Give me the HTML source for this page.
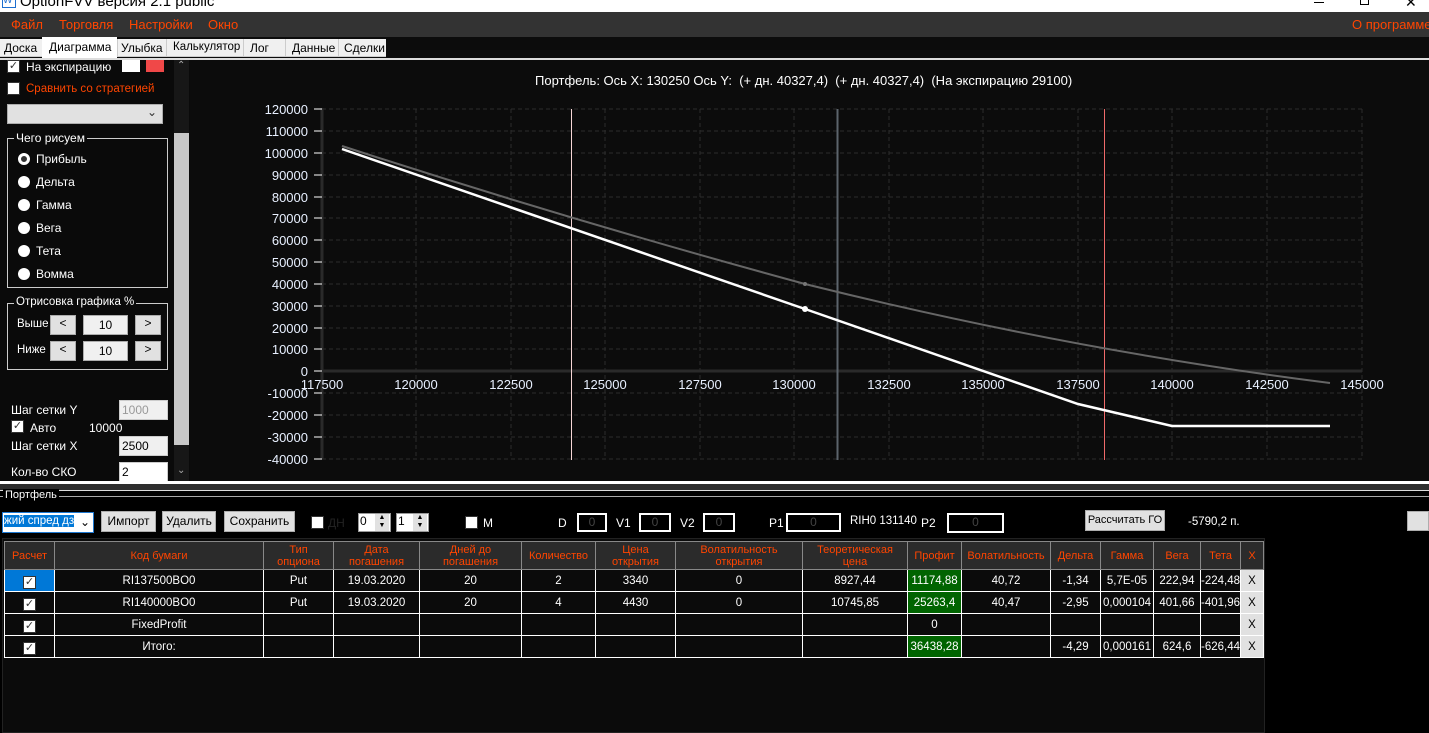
<!DOCTYPE html>
<html><head><meta charset="utf-8"><style>
*{box-sizing:border-box;margin:0;padding:0}
body{width:1429px;height:733px;background:#000;font-family:"Liberation Sans","DejaVu Sans",sans-serif;font-size:12px;color:#fff;position:relative;overflow:hidden}
.a{position:absolute;white-space:nowrap}
.btn{position:absolute;background:#e1e1e1;border:1px solid #adadad;color:#000;text-align:center;font-size:12px;white-space:nowrap}
.inp{position:absolute;border:2px solid #fff;background:#000;color:#444;text-align:center;font-size:12px}
.cb{position:absolute;width:13px;height:13px;background:#fff;border:1px solid #333}
.ck{position:absolute;width:13px;height:13px;background:#fff;border:1px solid #333;color:#333;font-size:11px;line-height:11px;text-align:center}
.rad{position:absolute;width:12px;height:12px;border-radius:50%;background:#fff}
table{border-collapse:collapse;position:absolute;left:4px;top:541px;table-layout:fixed}
td{border:1px solid #fff;text-align:center;font-size:11.5px;height:22px;padding:0;white-space:nowrap;overflow:hidden}
tr.h td{background:#2b2b2b;color:#ff4500;height:28px;line-height:12px;border-color:#888;font-size:11px}
.g{background:#006400}
.x{background:#e1e1e1;color:#000;border:1px solid #fff}
</style></head><body>
<div class="a" style="left:0;top:0;width:1429px;height:12px;background:#fff;overflow:hidden">
<div class="a" style="left:2px;top:-6px;width:14px;height:14px;border:1px solid #1e6fd0;color:#1e6fd0;font-size:10px">W</div>
<div class="a" style="left:20px;top:-7px;color:#000;font-size:15px">OptionFVV версия 2.1 public</div>
<div class="a" style="left:1314px;top:2px;width:10px;height:1px;background:#000"></div>
<div class="a" style="left:1360px;top:-4px;width:9px;height:9px;border:1px solid #000"></div>
<div class="a" style="left:1405px;top:-6px;color:#000;font-size:14px">✕</div>
</div>
<div class="a" style="left:0;top:12px;width:1429px;height:25px;background:#333;color:#ff4500;font-size:13px">
<span class="a" style="left:11px;top:5px">Файл</span>
<span class="a" style="left:59px;top:5px">Торговля</span>
<span class="a" style="left:129px;top:5px">Настройки</span>
<span class="a" style="left:208px;top:5px">Окно</span>
<span class="a" style="left:1352px;top:5px">О программе</span>
</div>
<div class="a" style="left:0;top:37px;width:1429px;height:21px;background:#0c0c0c"></div>
<div class="a" style="left:0;top:39px;width:386px;height:18px;background:#f0f0f0;border-bottom:1px solid #ccc"></div>
<div class="a" style="left:42px;top:37px;width:75px;height:21px;background:#fff"></div>
<div class="a" style="top:41px;left:4px;color:#000">Доска</div>
<div class="a" style="top:40px;left:49px;color:#000">Диаграмма</div>
<div class="a" style="top:41px;left:121px;color:#000">Улыбка</div>
<div class="a" style="top:41px;left:173px;color:#000;font-size:11.5px">Калькулятор</div>
<div class="a" style="top:41px;left:250px;color:#000">Лог</div>
<div class="a" style="top:41px;left:292px;color:#000">Данные</div>
<div class="a" style="top:41px;left:344px;color:#000">Сделки</div>
<div class="a" style="left:117px;top:39px;width:1px;height:18px;background:#ccc"></div>
<div class="a" style="left:166px;top:39px;width:1px;height:18px;background:#ccc"></div>
<div class="a" style="left:243px;top:39px;width:1px;height:18px;background:#ccc"></div>
<div class="a" style="left:285px;top:39px;width:1px;height:18px;background:#ccc"></div>
<div class="a" style="left:338px;top:39px;width:1px;height:18px;background:#ccc"></div>
<div class="a" style="left:0;top:58px;width:1429px;height:2px;background:#ddd"></div>
<div class="a" style="left:0;top:60px;width:190px;height:421px;background:#0a0a0a"></div>
<div class="a" style="left:174px;top:60px;width:15px;height:421px;background:#171717"></div>
<div class="a" style="left:174px;top:133px;width:15px;height:312px;background:#c8c8c8"></div>
<div class="a" style="left:177px;top:60px;color:#aaa;font-size:10px">⌃</div>
<div class="a" style="left:177px;top:465px;color:#aaa;font-size:10px">⌄</div>
<div class="ck" style="left:7px;top:60px">✓</div>
<div class="a" style="left:26px;top:60px">На экспирацию</div>
<div class="a" style="left:122px;top:60px;width:18px;height:12px;background:#fff"></div>
<div class="a" style="left:146px;top:60px;width:18px;height:12px;background:#f04848"></div>
<div class="cb" style="left:7px;top:82px"></div>
<div class="a" style="left:26px;top:83px;color:#ff4500;font-size:11.5px">Сравнить со стратегией</div>
<div class="a" style="left:7px;top:104px;width:156px;height:20px;background:#e1e1e1;border:1px solid #adadad;color:#333;text-align:right;padding-right:5px">⌄</div>
<div class="a" style="left:7px;top:138px;width:161px;height:150px;border:1px solid #ccc"></div>
<div class="a" style="left:14px;top:131px;background:#0a0a0a;padding:0 2px">Чего рисуем</div>
<div class="rad" style="left:18px;top:153px;border:3px solid #fff;background:#333"></div><div class="a" style="left:36px;top:152px">Прибыль</div>
<div class="rad" style="left:18px;top:176px"></div><div class="a" style="left:36px;top:175px">Дельта</div>
<div class="rad" style="left:18px;top:199px"></div><div class="a" style="left:36px;top:198px">Гамма</div>
<div class="rad" style="left:18px;top:222px"></div><div class="a" style="left:36px;top:221px">Вега</div>
<div class="rad" style="left:18px;top:245px"></div><div class="a" style="left:36px;top:244px">Тета</div>
<div class="rad" style="left:18px;top:268px"></div><div class="a" style="left:36px;top:267px">Вомма</div>
<div class="a" style="left:7px;top:303px;width:161px;height:67px;border:1px solid #ccc"></div>
<div class="a" style="left:14px;top:296px;background:#0a0a0a;padding:0 2px;font-size:11.5px">Отрисовка графика %</div>
<div class="a" style="left:17px;top:318px;font-size:11.5px">Выше</div>
<div class="btn" style="left:50px;top:315px;width:26px;height:20px">&lt;</div>
<div class="btn" style="left:83px;top:315px;width:45px;height:20px;background:#f0f0f0;line-height:18px">10</div>
<div class="btn" style="left:135px;top:315px;width:26px;height:20px">&gt;</div>
<div class="a" style="left:17px;top:344px;font-size:11.5px">Ниже</div>
<div class="btn" style="left:50px;top:341px;width:26px;height:20px">&lt;</div>
<div class="btn" style="left:83px;top:341px;width:45px;height:20px;background:#f0f0f0;line-height:18px">10</div>
<div class="btn" style="left:135px;top:341px;width:26px;height:20px">&gt;</div>
<div class="a" style="left:11px;top:403px">Шаг сетки Y</div>
<div class="a" style="left:119px;top:400px;width:49px;height:20px;background:#f0f0f0;border:1px solid #ccc;color:#999;padding:2px">1000</div>
<div class="ck" style="left:11px;top:420px">✓</div>
<div class="a" style="left:30px;top:421px">Авто</div>
<div class="a" style="left:89px;top:421px">10000</div>
<div class="a" style="left:11px;top:439px">Шаг сетки X</div>
<div class="a" style="left:119px;top:436px;width:49px;height:20px;background:#f0f0f0;border:1px solid #ccc;color:#000;padding:2px">2500</div>
<div class="a" style="left:11px;top:465px">Кол-во СКО</div>
<div class="a" style="left:119px;top:462px;width:49px;height:20px;background:#fff;border:1px solid #ccc;color:#000;padding:2px">2</div>
<div class="a" style="left:190px;top:60px;width:1239px;height:421px;background:#0c0c0c"></div>
<div class="a" style="left:535px;top:73px;font-size:13px;color:#fff">Портфель: Ось X: 130250 Ось Y: &nbsp;(+ дн. 40327,4) &nbsp;(+ дн. 40327,4) &nbsp;(На экспирацию 29100)</div>
<svg class="a" style="left:0;top:0" width="1429" height="481" viewBox="0 0 1429 481">
<g stroke="#2c2c2c" stroke-dasharray="4,3" stroke-width="1">
<path d="M322 109H1362M322 131H1362M322 153H1362M322 175H1362M322 197H1362M322 218H1362M322 240H1362M322 262H1362M322 284H1362M322 306H1362M322 328H1362M322 349H1362M322 393H1362M322 415H1362M322 437H1362M322 459H1362"/>
<path d="M416 109V459M511 109V459M605 109V459M700 109V459M794 109V459M889 109V459M983 109V459M1078 109V459M1172 109V459M1267 109V459M1362 109V459"/>
</g>
<path d="M322 371H1362M322 108V459" stroke="#2a2a2a" stroke-width="3"/>
<g stroke="#fff"><path d="M314 109H322M314 131H322M314 153H322M314 175H322M314 197H322M314 218H322M314 240H322M314 262H322M314 284H322M314 306H322M314 328H322M314 349H322M314 371H322M314 393H322M314 415H322M314 437H322M314 459H322"/></g>
<g fill="#e8f0ff" font-size="13" text-anchor="end" font-family="Liberation Sans,sans-serif">
<text x="308" y="114">120000</text><text x="308" y="136">110000</text><text x="308" y="158">100000</text><text x="308" y="180">90000</text><text x="308" y="202">80000</text><text x="308" y="223">70000</text><text x="308" y="245">60000</text><text x="308" y="267">50000</text><text x="308" y="289">40000</text><text x="308" y="311">30000</text><text x="308" y="333">20000</text><text x="308" y="354">10000</text><text x="308" y="376">0</text><text x="308" y="398">-10000</text><text x="308" y="420">-20000</text><text x="308" y="442">-30000</text><text x="308" y="464">-40000</text>
</g>
<g fill="#e8f0ff" font-size="13" text-anchor="middle" font-family="Liberation Sans,sans-serif">
<text x="322" y="389">117500</text><text x="416" y="389">120000</text><text x="511" y="389">122500</text><text x="605" y="389">125000</text><text x="700" y="389">127500</text><text x="794" y="389">130000</text><text x="889" y="389">132500</text><text x="983" y="389">135000</text><text x="1078" y="389">137500</text><text x="1172" y="389">140000</text><text x="1267" y="389">142500</text><text x="1362" y="389">145000</text>
</g>
<path d="M571.5 109V460" stroke="#f6d6d6" stroke-width="1"/>
<path d="M837.5 109V460" stroke="#5c646c" stroke-width="2"/>
<path d="M1104.5 109V460" stroke="#f06a6a" stroke-width="1"/>
<path d="M342 146Q570 220 805 284Q1070 350 1330 383" stroke="#666" stroke-width="2" fill="none"/>
<circle cx="805" cy="284" r="2" fill="#777"/>
<path d="M342 149L805 309L1078 404L1172 426L1330 426" stroke="#fff" stroke-width="2.5" fill="none"/>
<circle cx="805" cy="309" r="3" fill="#fff"/>
</svg>
<div class="a" style="left:0;top:481px;width:1429px;height:3px;background:#fff"></div>
<div class="a" style="left:0;top:484px;width:1429px;height:6px;background:#2e2e2e"></div>
<div class="a" style="left:0;top:490px;width:1429px;height:1px;background:#ddd"></div>
<div class="a" style="left:0;top:496px;width:1429px;height:1px;background:#aaa"></div>
<div class="a" style="left:3px;top:489px;background:#000;padding:0 2px;font-size:11px">Портфель</div>
<div class="a" style="left:2px;top:512px;width:92px;height:21px;border:1px solid #1e78d0;background:#fff;color:#000;overflow:hidden"><span style="background:#0078d7;color:#fff;position:absolute;left:1px;top:2px;font-size:11.5px">жий спред дз</span><span style="position:absolute;right:3px;top:2px">⌄</span></div>
<div class="btn" style="left:101px;top:511px;width:55px;height:21px;line-height:19px">Импорт</div>
<div class="btn" style="left:162px;top:511px;width:54px;height:21px;line-height:19px">Удалить</div>
<div class="btn" style="left:224px;top:511px;width:71px;height:21px;line-height:19px">Сохранить</div>
<div class="cb" style="left:311px;top:516px"></div>
<div class="a" style="left:328px;top:516px;color:#222">ДН</div>
<div class="a" style="left:358px;top:513px;width:33px;height:19px;background:#fff;border:1px solid #999;color:#000;padding-left:1px">0</div>
<div class="a" style="left:375px;top:514px;width:14px;height:17px;background:#e1e1e1;color:#000;font-size:7px;text-align:center;line-height:8px">▲<br>▼</div>
<div class="a" style="left:396px;top:513px;width:33px;height:19px;background:#fff;border:1px solid #999;color:#000;padding-left:1px">1</div>
<div class="a" style="left:413px;top:514px;width:14px;height:17px;background:#e1e1e1;color:#000;font-size:7px;text-align:center;line-height:8px">▲<br>▼</div>
<div class="cb" style="left:465px;top:516px"></div>
<div class="a" style="left:483px;top:516px">M</div>
<div class="a" style="left:558px;top:516px">D</div><div class="inp" style="left:577px;top:513px;width:30px;height:19px">0</div>
<div class="a" style="left:616px;top:516px">V1</div><div class="inp" style="left:639px;top:513px;width:32px;height:19px">0</div>
<div class="a" style="left:680px;top:516px">V2</div><div class="inp" style="left:703px;top:513px;width:32px;height:19px">0</div>
<div class="a" style="left:769px;top:516px">P1</div><div class="inp" style="left:786px;top:513px;width:55px;height:19px">0</div>
<div class="a" style="left:850px;top:515px;font-size:11.5px">RIH0 131140</div>
<div class="a" style="left:921px;top:516px">P2</div><div class="inp" style="left:947px;top:513px;width:57px;height:20px">0</div>
<div class="btn" style="left:1085px;top:510px;width:80px;height:21px;line-height:19px;font-size:11px">Рассчитать ГО</div>
<div class="a" style="left:1188px;top:516px;font-size:11.5px">-5790,2 п.</div>
<div class="btn" style="left:1407px;top:511px;width:22px;height:20px"></div>
<div class="a" style="left:2px;top:538px;width:1263px;height:195px;background:#0b0b0b;border:1px solid #222"></div>
<table>
<colgroup><col style="width:50px"><col style="width:209px"><col style="width:70px"><col style="width:86px"><col style="width:102px"><col style="width:74px"><col style="width:80px"><col style="width:127px"><col style="width:105px"><col style="width:54px"><col style="width:89px"><col style="width:50px"><col style="width:53px"><col style="width:47px"><col style="width:39px"><col style="width:23px"></colgroup>
<tr class="h"><td>Расчет</td><td>Код бумаги</td><td>Тип<br>опциона</td><td>Дата<br>погашения</td><td>Дней до<br>погашения</td><td>Количество</td><td>Цена<br>открытия</td><td>Волатильность<br>открытия</td><td>Теоретическая<br>цена</td><td>Профит</td><td>Волатильность</td><td>Дельта</td><td>Гамма</td><td>Вега</td><td>Тета</td><td>X</td></tr>
<tr><td style="background:#0078d7"><span class="ck" style="position:relative;display:inline-block;top:2px">✓</span></td><td>RI137500BO0</td><td>Put</td><td>19.03.2020</td><td>20</td><td>2</td><td>3340</td><td>0</td><td>8927,44</td><td class="g">11174,88</td><td>40,72</td><td>-1,34</td><td>5,7E-05</td><td>222,94</td><td>-224,48</td><td class="x">X</td></tr>
<tr><td><span class="ck" style="position:relative;display:inline-block;top:2px">✓</span></td><td>RI140000BO0</td><td>Put</td><td>19.03.2020</td><td>20</td><td>4</td><td>4430</td><td>0</td><td>10745,85</td><td class="g">25263,4</td><td>40,47</td><td>-2,95</td><td>0,000104</td><td>401,66</td><td>-401,96</td><td class="x">X</td></tr>
<tr><td><span class="ck" style="position:relative;display:inline-block;top:2px">✓</span></td><td>FixedProfit</td><td></td><td></td><td></td><td></td><td></td><td></td><td></td><td>0</td><td></td><td></td><td></td><td></td><td></td><td class="x">X</td></tr>
<tr><td><span class="ck" style="position:relative;display:inline-block;top:2px">✓</span></td><td>Итого:</td><td></td><td></td><td></td><td></td><td></td><td></td><td></td><td class="g">36438,28</td><td></td><td>-4,29</td><td>0,000161</td><td>624,6</td><td>-626,44</td><td class="x">X</td></tr>
</table>
</body></html>
